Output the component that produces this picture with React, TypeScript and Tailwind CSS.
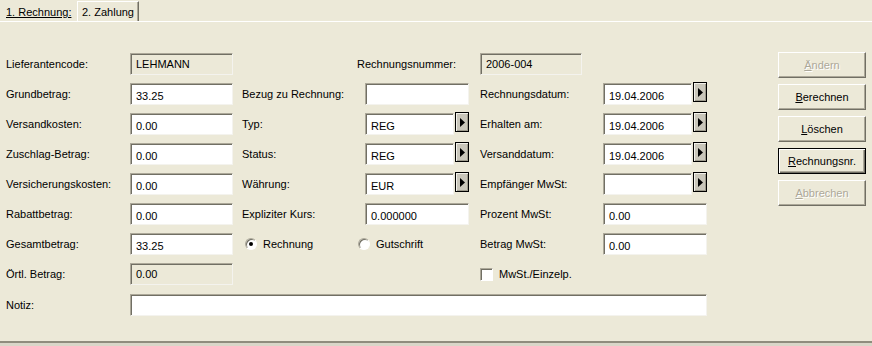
import React from "react";

const font = { fontFamily: '"Liberation Sans", Arial, sans-serif' };

const Label = ({ children, className = "" }: { children: React.ReactNode; className?: string }) => (
    <div className={"flex items-center h-[22px] whitespace-nowrap " + className}>{children}</div>
);

const Field = ({ value = "", readOnly = false, className = "w-full" }: { value?: string; readOnly?: boolean; className?: string }) => (
    <div
        className={
            "h-[22px] border border-t-[#aca899] border-l-[#aca899] border-r-[#f4f3ee] border-b-[#f4f3ee] shadow-[inset_1px_1px_0_#716f64] pl-[5px] whitespace-nowrap overflow-hidden " +
            (readOnly ? "bg-[#ece9d8] pt-[2px] " : "bg-white pt-[4px] ") +
            className
        }
    >
        {value}
    </div>
);

const Arrow = () => (
    <div className="w-[14px] h-[20px] -mt-px border border-black bg-[#c9c6ba] shadow-[inset_1px_1px_0_#f2f1ea,inset_-1px_-1px_0_#9d9a8c] flex items-center justify-center">
        <svg width="5" height="9" viewBox="0 0 5 9">
            <path d="M0 0 L5 4.5 L0 9 Z" fill="#000" />
        </svg>
    </div>
);

const Combo = ({ value = "" }: { value?: string }) => (
    <div className="flex items-start gap-px">
        <Field value={value} className="w-[90px]" />
        <Arrow />
    </div>
);

const Radio = ({ checked, label }: { checked?: boolean; label: string }) => (
    <div className="flex items-center gap-[6px]">
        <div className="w-[12px] h-[12px] rounded-full bg-white border border-t-[#aca899] border-l-[#aca899] border-r-white border-b-white shadow-[inset_1px_1px_0_#716f64] flex items-center justify-center">
            {checked && <div className="w-[4px] h-[4px] rounded-full bg-black" />}
        </div>
        <span>{label}</span>
    </div>
);

const Button = ({ mn, rest, disabled = false, isDefault = false }: { mn: string; rest: string; disabled?: boolean; isDefault?: boolean }) => (
    <div
        className={
            "h-[26px] w-[88px] flex items-center justify-center bg-[#ece9d8] " +
            (isDefault
                ? "border border-black shadow-[inset_1px_1px_0_#fff,inset_-1px_-1px_0_#716f64,inset_-2px_-2px_0_#aca899] "
                : "border border-t-white border-l-white border-r-[#716f64] border-b-[#716f64] shadow-[inset_-1px_-1px_0_#aca899] ") +
            (disabled ? "text-[#aca899] [text-shadow:1px_1px_0_#fff]" : "text-black")
        }
    >
        <span>
            <span className="underline">{mn}</span>
            {rest}
        </span>
    </div>
);

export default function App() {
    return (
        <div className="w-[872px] h-[346px] bg-[#ece9d8] flex flex-col text-[11px] text-black" style={font}>
            <div className="h-[22px] flex items-end border-b border-white">
                <div className="w-[77px] h-[21px] pl-[6px] pt-[4px]">
                    <span className="underline">1. Rechnung:</span>
                </div>
                <div className="w-[62px] h-[20px] border-t border-l border-white border-r border-r-[#716f64] shadow-[inset_-1px_0_0_#aca899] pl-[4px] pt-[2px]">
                    2. Zahlung
                </div>
            </div>

            <div className="flex-1 flex pl-[6px] pt-[31px]">
                <div className="grid grid-cols-[124px_103px_9px_123px_104px_11px_123px_104px] auto-rows-[22px] gap-y-2">
                    <Label>Lieferantencode:</Label>
                    <Field value="LEHMANN" readOnly />
                    <div className="col-span-4">
                        <Label className="ml-[124px]">Rechnungsnummer:</Label>
                    </div>
                    <Field value="2006-004" readOnly className="w-[102px]" />
                    <div />

                    <Label>Grundbetrag:</Label>
                    <Field value="33.25" />
                    <div />
                    <Label>Bezug zu Rechnung:</Label>
                    <Field />
                    <div />
                    <Label>Rechnungsdatum:</Label>
                    <Combo value="19.04.2006" />

                    <Label>Versandkosten:</Label>
                    <Field value="0.00" />
                    <div />
                    <Label>Typ:</Label>
                    <Combo value="REG" />
                    <div />
                    <Label>Erhalten am:</Label>
                    <Combo value="19.04.2006" />

                    <Label>Zuschlag-Betrag:</Label>
                    <Field value="0.00" />
                    <div />
                    <Label>Status:</Label>
                    <Combo value="REG" />
                    <div />
                    <Label>Versanddatum:</Label>
                    <Combo value="19.04.2006" />

                    <Label>Versicherungskosten:</Label>
                    <Field value="0.00" />
                    <div />
                    <Label>Währung:</Label>
                    <Combo value="EUR" />
                    <div />
                    <Label>Empfänger MwSt:</Label>
                    <Combo />

                    <Label>Rabattbetrag:</Label>
                    <Field value="0.00" />
                    <div />
                    <Label>Expliziter Kurs:</Label>
                    <Field value="0.000000" />
                    <div />
                    <Label>Prozent MwSt:</Label>
                    <Field value="0.00" />

                    <Label>Gesamtbetrag:</Label>
                    <Field value="33.25" />
                    <div />
                    <div className="col-span-2 flex items-center pl-[3px]">
                        <div className="w-[113px]">
                            <Radio checked label="Rechnung" />
                        </div>
                        <Radio label="Gutschrift" />
                    </div>
                    <div />
                    <Label>Betrag MwSt:</Label>
                    <Field value="0.00" />

                    <Label>Örtl. Betrag:</Label>
                    <Field value="0.00" readOnly />
                    <div className="col-span-4" />
                    <div className="col-span-2 flex items-center gap-[6px]">
                        <div className="w-[13px] h-[13px] bg-white border border-t-[#aca899] border-l-[#aca899] border-r-white border-b-white shadow-[inset_1px_1px_0_#716f64]" />
                        <span>MwSt./Einzelp.</span>
                    </div>

                    <Label className="mt-[1px]">Notiz:</Label>
                    <div className="col-span-7 mt-[1px]">
                        <Field />
                    </div>
                </div>

                <div className="ml-[71px] -mt-px flex flex-col gap-[6px]">
                    <Button mn="Ä" rest="ndern" disabled />
                    <Button mn="B" rest="erechnen" />
                    <Button mn="L" rest="öschen" />
                    <Button mn="R" rest="echnungsnr." isDefault />
                    <Button mn="A" rest="bbrechen" disabled />
                </div>
            </div>

            <div className="h-[5px] border-t-2 border-[#8f8c7d] bg-[#d9d6c8]" />
        </div>
    );
}
